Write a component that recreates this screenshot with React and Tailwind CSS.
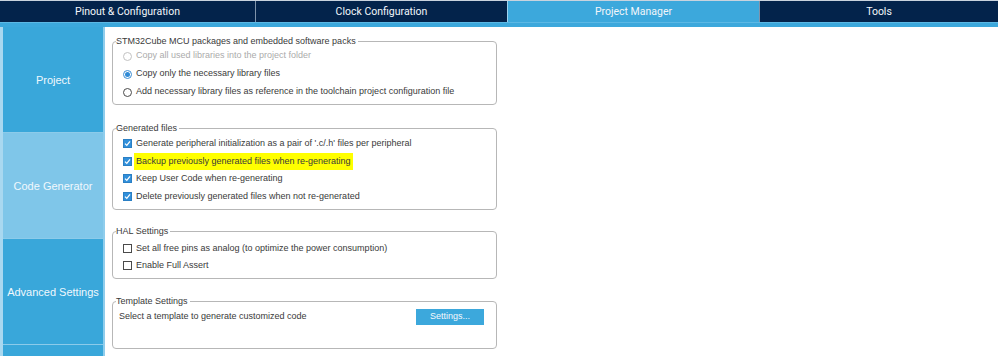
import React from "react";

const tabs = [
  { label: "Pinout & Configuration", w: "w-[255px]" },
  { label: "Clock Configuration", w: "w-[252px]" },
  { label: "Project Manager", w: "w-[252px]", active: true },
  { label: "Tools", w: "flex-1" },
];

const sideItems = [
  { label: "Project" },
  { label: "Code Generator", active: true },
  { label: "Advanced Settings" },
  { label: "" },
];

export default function App() {
  return (
    <div className="w-[998px] h-[356px] overflow-hidden bg-white font-['Liberation_Sans',Arial,sans-serif]">
      {/* Top tabs */}
      <div className="flex h-[22px] border-t border-[#c9d3de] bg-[#03234b]">
        {tabs.map((t, i) => (
          <div
            key={t.label}
            className={`${t.w} flex items-center justify-center pt-[1px] font-['Roboto',sans-serif] text-[10.5px] text-[#f2f6fa] ${
              i > 0 ? "border-l border-[#7f93ab]" : ""
            } ${t.active ? "bg-[#3ca8dc] border-[#9fd2ee]" : ""}`}
          >
            {t.label}
          </div>
        ))}
      </div>
      <div className="h-[5px] bg-[#3ca8dc] border-t border-[#5cb8e4]" />

      <div className="flex">
        {/* Left sidebar */}
        <div className="w-[105px] shrink-0 border-l-[3px] border-r-[2px] border-l-[#a9d8f0] border-r-[#8fcdec] bg-[#39a7da]">
          {sideItems.map((s, i) => (
            <div
              key={i}
              className={`h-[106px] flex items-center justify-center border-b border-[#8ccbea] pt-[1px] text-[11px] text-[#f0f8fd] ${
                s.active ? "bg-[#7fc6e9]" : ""
              }`}
            >
              {s.label}
            </div>
          ))}
        </div>

        {/* Content */}
        <div className="flex-1 pt-[9px] pl-[7px] text-[9px] text-[#3a3a3a]">
          <Group title="STM32Cube MCU packages and embedded software packs" className="pb-[3px]">
            <Row h="h-[18px]">
              <Radio disabled />
              <span className="text-[#ababab]">Copy all used libraries into the project folder</span>
            </Row>
            <Row h="h-[18px]">
              <Radio checked />
              <span>Copy only the necessary library files</span>
            </Row>
            <Row h="h-[18px]">
              <Radio />
              <span>Add necessary library files as reference in the toolchain project configuration file</span>
            </Row>
          </Group>

          <Group title="Generated files" className="mt-[18px] pt-[1px] pb-[4px]">
            <Row h="h-[17.5px]">
              <Check checked />
              <span>Generate peripheral initialization as a pair of '.c/.h' files per peripheral</span>
            </Row>
            <Row h="h-[17.5px]">
              <Check checked />
              <span className="bg-[#ffff00] px-[2px] py-[2px] -ml-[2px]">
                Backup previously generated files when re-generating
              </span>
            </Row>
            <Row h="h-[17.5px]">
              <Check checked />
              <span>Keep User Code when re-generating</span>
            </Row>
            <Row h="h-[17.5px]">
              <Check checked />
              <span>Delete previously generated files when not re-generated</span>
            </Row>
          </Group>

          <Group title="HAL Settings" className="mt-[16px] pt-[3px] pb-[4px]">
            <Row h="h-[17px]">
              <Check />
              <span>Set all free pins as analog (to optimize the power consumption)</span>
            </Row>
            <Row h="h-[17px]">
              <Check />
              <span>Enable Full Assert</span>
            </Row>
          </Group>

          <Group title="Template Settings" className="mt-[17px] pt-[2px] pb-[23px]">
            <div className="flex h-[16px] items-center -ml-[4px]">
              <span className="w-[297px]">Select a template to generate customized code</span>
              <button className="w-[68px] h-[16px] bg-[#3ca8dc] text-[#f4f9fd] text-[9px]">
                Settings...
              </button>
            </div>
          </Group>
        </div>
      </div>
    </div>
  );
}

function Group({ title, className, children }) {
  return (
    <fieldset className={`w-[385px] border border-[#b7b7b7] rounded-[4px] pl-[3px] ${className}`}>
      <legend className="pr-[2px] leading-[11px]">{title}</legend>
      <div className="pl-[7px]">{children}</div>
    </fieldset>
  );
}

function Row({ h, children }) {
  return <div className={`flex items-center gap-[4px] ${h}`}>{children}</div>;
}

function Radio({ checked, disabled }) {
  return (
    <span
      className={`w-[9px] h-[9px] rounded-full border flex items-center justify-center bg-white ${
        disabled ? "border-[#c2c2c2]" : checked ? "border-[#3b8dd3]" : "border-[#4a4a4a]"
      }`}
    >
      {checked && <span className="w-[5px] h-[5px] rounded-full bg-[#2f8ad6]" />}
    </span>
  );
}

function Check({ checked }) {
  if (!checked) {
    return <span className="w-[9px] h-[9px] border border-[#4a4a4a] bg-white" />;
  }
  return (
    <span className="w-[9px] h-[9px] bg-[#3190db] border border-[#2a7fc4] flex items-center justify-center">
      <svg width="7" height="7" viewBox="0 0 7 7">
        <path d="M1 3.6 L2.8 5.4 L6 1.4" fill="none" stroke="#fff" strokeWidth="1.3" />
      </svg>
    </span>
  );
}
